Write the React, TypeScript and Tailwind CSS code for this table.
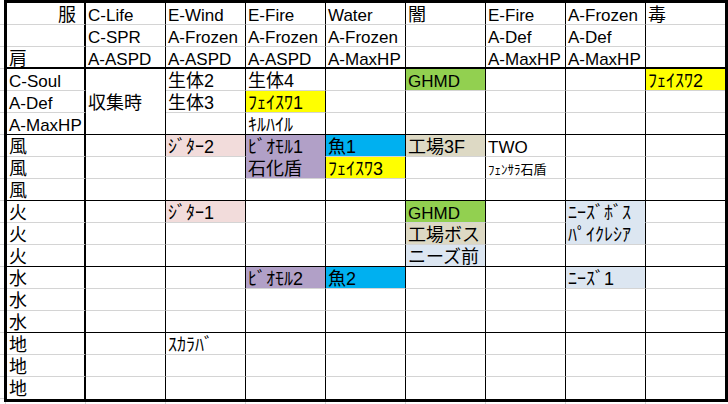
import React from "react";

type Cell = [string, string?, string?];

const FILL: Record<string, string> = {
  g: "bg-[#92d050]",
  y: "bg-[#ffff00]",
  p: "bg-[#f2dcdb]",
  v: "bg-[#b1a0c7]",
  b: "bg-[#00b0f0]",
  t: "bg-[#ddd9c4]",
  l: "bg-[#dce6f1]",
};

const FILLB: Record<string, string> = {
  g: "border-b-[#92d050]",
  y: "border-b-[#ffff00]",
  p: "border-b-[#f2dcdb]",
  v: "border-b-[#b1a0c7]",
  b: "border-b-[#00b0f0]",
  t: "border-b-[#ddd9c4]",
  l: "border-b-[#dce6f1]",
};

const header: string[][] = [
  ["服", "C-Life", "E-Wind", "E-Fire", "Water", "闇", "E-Fire", "A-Frozen", "毒"],
  ["", "C-SPR", "A-Frozen", "A-Frozen", "A-Frozen", "", "A-Def", "A-Def", ""],
  ["肩", "A-ASPD", "A-ASPD", "A-ASPD", "A-MaxHP", "", "A-MaxHP", "A-MaxHP", ""],
];

const E: Cell = [""];

const body: Cell[][] = [
  [["C-Soul"], E, ["生体2"], ["生体4"], E, ["GHMD", "g"], E, E, ["ﾌｪｲｽﾜ2", "y"]],
  [["A-Def"], E, ["生体3"], ["ﾌｪｲｽﾜ1", "y"], E, E, E, E, E],
  [["A-MaxHP"], E, E, ["ｷﾙﾊｲﾙ"], E, E, E, E, E],
  [["風"], E, ["ｼﾞﾀｰ2", "p"], ["ﾋﾞｵﾓﾙ1", "v"], ["魚1", "b"], ["工場3F", "t"], ["TWO"], E, E],
  [["風"], E, E, ["石化盾", "v"], ["ﾌｪｲｽﾜ3", "y"], E, ["ﾌｪﾝｻﾗ石盾", undefined, "s"], E, E],
  [["風"], E, E, E, E, E, E, E, E],
  [["火"], E, ["ｼﾞﾀｰ1", "p"], E, E, ["GHMD", "g"], E, ["ﾆｰｽﾞﾎﾞｽ", "l"], E],
  [["火"], E, E, E, E, ["工場ボス", "t"], E, ["ﾊﾟｲｸﾚｼｱ", "l"], E],
  [["火"], E, E, E, E, ["ニーズ前", "l"], E, E, E],
  [["水"], E, E, ["ﾋﾞｵﾓﾙ2", "v"], ["魚2", "b"], E, E, ["ﾆｰｽﾞ1", "l"], E],
  [["水"], E, E, E, E, E, E, E, E],
  [["水"], E, E, E, E, E, E, E, E],
  [["地"], E, ["ｽｶﾗﾊﾞ"], E, E, E, E, E, E],
  [["地"], E, E, E, E, E, E, E, E],
  [["地"], E, E, E, E, E, E, E, E],
];

const isCJK = (s: string) => /[\u3000-\u9fff\uff00-\uffef]/.test(s);

function rightBorder(c: number) {
  if (c === 0) return "border-r-2 border-r-black";
  if (c === 8) return "";
  return "border-r border-r-black";
}

function textSize(s: string, small?: string) {
  if (small) return "text-[13px]";
  return isCJK(s) ? "text-[18px]" : "text-[17px]";
}

export default function App() {
  const cells: React.ReactNode[] = [];

  header.forEach((row, r) => {
    row.forEach((txt, c) => {
      const bottom =
        r === 2 ? "border-b-2 border-b-black" : "border-b border-b-[#d4d4d4]";
      const align = r === 0 && c === 0 ? "text-right pr-[8px]" : "pl-[2px]";
      cells.push(
        <div
          key={`h${r}-${c}`}
          className={`h-[22px] whitespace-nowrap pt-[3px] leading-[19px] ${align} ${bottom} ${rightBorder(c)} ${textSize(txt)}`}
        >
          {txt}
        </div>
      );
    });
  });

  body.forEach((row, r) => {
    row.forEach((cell, c) => {
      if (c === 1 && r < 3) {
        if (r === 0) {
          cells.push(
            <div
              key="merged"
              className="row-span-3 flex items-center whitespace-nowrap pl-[2px] pt-[3px] leading-[19px] text-[18px] border-b border-b-black border-r border-r-black"
            >
              収集時
            </div>
          );
        }
        return;
      }
      const [txt, fill, small] = cell;
      const below = r < 14 ? body[r + 1][c][1] : undefined;
      let bottom = "";
      if (r % 3 === 2) {
        bottom = r < 14 ? "border-b border-b-black" : "";
      } else if (fill && below === fill) {
        bottom = `border-b ${FILLB[fill]}`;
      } else {
        bottom = "border-b border-b-[#d4d4d4]";
      }
      const bg = fill ? FILL[fill] : "bg-white";
      const pad = small ? "pt-[4px] leading-[18px]" : "pt-[3px] leading-[19px]";
      cells.push(
        <div
          key={`b${r}-${c}`}
          className={`h-[22px] whitespace-nowrap pl-[2px] ${pad} ${bg} ${bottom} ${rightBorder(c)} ${textSize(txt, small)}`}
        >
          {txt}
        </div>
      );
    });
  });

  return (
    <div className="w-[728px] h-[404px] overflow-hidden bg-white text-black font-['Liberation_Sans','Noto_Sans_CJK_JP',sans-serif]">
      <div className="flex">
        <div className="flex w-[4px] flex-col">
          <div className="h-[3px]" />
          {Array.from({ length: 18 }).map((_, i) => (
            <div key={i} className="h-[22px] border-b border-b-[#d4d4d4]" />
          ))}
        </div>
        <div className="grid w-[724px] grid-cols-[79px_repeat(7,80px)_79px] auto-rows-[22px] border-[3px] border-black">
          {cells}
        </div>
      </div>
      <div className="flex h-[4px]">
        <div className="w-[6px] border-r border-r-[#d4d4d4]" />
        <div className="w-[80px] border-r border-r-[#d4d4d4]" />
        <div className="w-[80px] border-r border-r-[#d4d4d4]" />
        <div className="w-[80px] border-r border-r-[#d4d4d4]" />
        <div className="w-[80px] border-r border-r-[#d4d4d4]" />
        <div className="w-[80px] border-r border-r-[#d4d4d4]" />
        <div className="w-[80px] border-r border-r-[#d4d4d4]" />
        <div className="w-[80px] border-r border-r-[#d4d4d4]" />
        <div className="w-[80px] border-r border-r-[#d4d4d4]" />
      </div>
    </div>
  );
}
